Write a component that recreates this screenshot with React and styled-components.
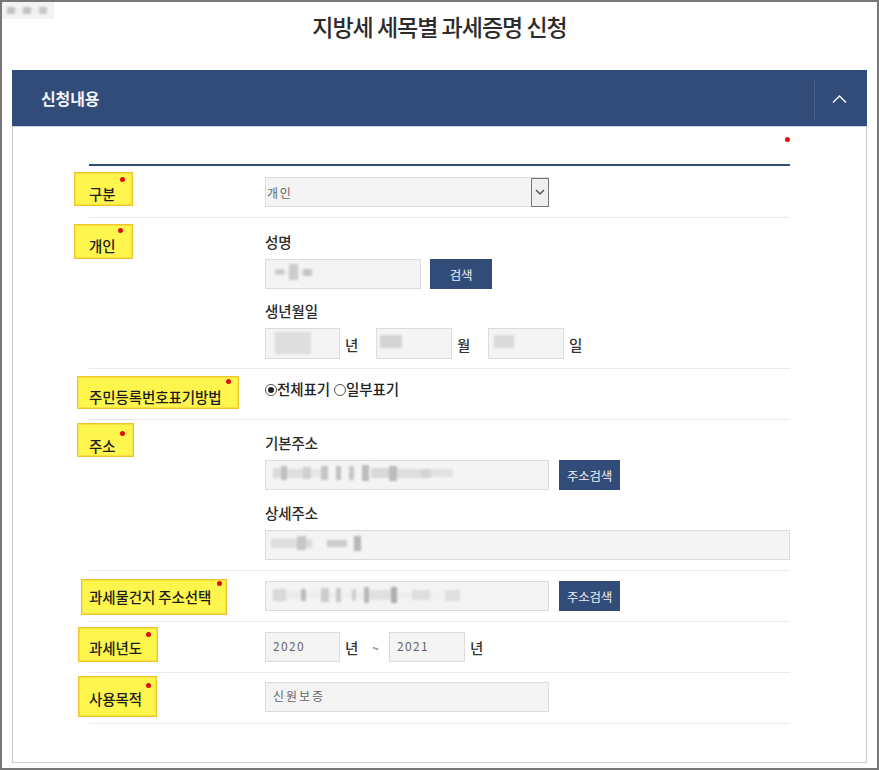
import React from "react";
import styled, { createGlobalStyle } from "styled-components";

const Global = createGlobalStyle`
  * { box-sizing: border-box; }
  html, body { margin: 0; padding: 0; background: #fff; }
  body { font-family: "Noto Sans CJK KR", "Noto Sans", sans-serif; color: #222; }
`;
const Frame = styled.div`
  position: relative; width: 879px; height: 770px; padding: 0 10px;
  border: 2px solid #777; background: #fff; overflow: hidden;
`;
const Corner = styled.div`
  position: absolute; left: -2px; top: -2px; width: 54px; height: 19px; background: #f3f3f3;
  display: flex; align-items: center; padding: 2px 7px 0;
`;
const Title = styled.h1`
  margin: 0 0 20px; height: 48px; line-height: 48px; text-align: center;
  font-size: 23px; font-weight: 500; letter-spacing: -1px; color: #2b2b2b;
`;
const PanelHead = styled.header`
  height: 57px; background: #324c7a; border-bottom: 1px solid #ccd3de;
  display: flex; align-items: center; justify-content: space-between; color: #fff;
`;
const PanelTitle = styled.h2`
  margin: 0 0 1px 29px; font-size: 16px; font-weight: 700; letter-spacing: -0.1px; color: #f4f6fa;
`;
const Toggle = styled.div`
  width: 53px; height: 40px; margin-top: 4px; padding: 0 3px 3px 0; border-left: 1px solid #47608c;
  display: flex; align-items: center; justify-content: center;
`;
const PanelBody = styled.div`
  position: relative; padding: 37px 76px 38px; border: 1px solid #ccc; border-top: 0;
`;
const StrayDot = styled.i`
  position: absolute; top: 10px; right: 76px; width: 5px; height: 5px; border-radius: 50%; background: #e80a0a;
`;
const Rows = styled.div` border-top: 2px solid #324c7a; `;
const Row = styled.div`
  display: grid; grid-template-columns: 176px 1fr; border-bottom: 1px solid #eaeaea;
`;
const LabelCell = styled.div` padding-top: ${p => p.$top}px; `;
const Tag = styled.div`
  position: relative; width: ${p => p.$w}px; height: ${p => p.$h}px;
  margin-left: -${p => p.$out}px; padding: ${p => p.$pt}px 0 0 ${p => p.$out - 1}px;
  background: #fff64d; border: 1px solid #edc42c; box-shadow: inset 0 0 0 1px #f8e040;
  font-size: 14.5px; line-height: 20px; font-weight: 500; letter-spacing: -0.1px; color: #1d1d1d; white-space: nowrap;
`;
const TagDot = styled.i`
  position: absolute; top: ${p => p.$dy}px; right: ${p => p.$dr}px; width: 5px; height: 5px; border-radius: 50%; background: #e00a0a;
`;
const FieldCell = styled.div`
  padding: ${p => p.$top ?? 10}px 0 ${p => p.$bottom ?? 10}px;
`;
const Caption = styled.div`
  height: 20px; line-height: 20px; margin: ${p => p.$gap ?? 0}px 0 7px;
  font-size: 14.5px; font-weight: 500; color: #2a2a2a; letter-spacing: -0.1px;
`;
const Line = styled.div` display: flex; align-items: center; `;
const Box = styled.div`
  display: flex; align-items: center; width: ${p => p.$w}px; height: ${p => p.$h ?? 30}px; padding-left: ${p => p.$pl ?? 7}px;
  background: #f4f4f4; border: 1px solid #dcdcdc; flex: none;
  font-size: 12px; color: #666; letter-spacing: ${p => p.$ls ?? 1.3}px;
`;
const BoxText = styled.span` margin-top: -4px; `;
const Unit = styled.span`
  font-size: 14.5px; font-weight: 500; color: #333; width: ${p => p.$w ?? 36}px; padding-left: 5px; flex: none; margin-top: 1px;
`;
const Tilde = styled.span` width: 17px; font-size: 12px; color: #555; flex: none; `;
const Button = styled.button`
  width: ${p => p.$w}px; height: 30px; margin-left: ${p => p.$ml}px; padding: 0; border: 0; background: #324c7a; color: #edf0f5;
  font: 400 12.5px "Noto Sans CJK KR", sans-serif; letter-spacing: -0.2px;
`;
const Select = styled.div`
  display: flex; align-items: center; justify-content: space-between; width: 284px; height: 30px; padding-left: 1px;
  background: #f4f4f4; border: 1px solid #dcdcdc; font-size: 12px; color: #666; letter-spacing: 1.6px;
`;
const SelectArrow = styled.span`
  display: flex; align-items: center; justify-content: center; width: 18px; height: 29px; margin-right: -1px;
  background: #efefef; border: 1px solid #777;
`;
const RadioLine = styled.div`
  display: flex; align-items: center; height: 20px; font-size: 14.5px; font-weight: 500; color: #222; letter-spacing: -0.1px;
`;
const Radio = styled.span`
  position: relative; width: 12px; height: 12px; margin: 4px 0 0 ${p => p.$ml ?? 0}px; border-radius: 50%; border: 1px solid #555; background: #fff; flex: none;
  &::after { content: ""; display: ${p => p.$on ? "block" : "none"}; position: absolute; inset: 2px; border-radius: 50%; background: #222; }
`;
const Mosaic = styled.div`
  display: flex; align-items: center; margin: ${p => p.$mt ?? -4}px 0 0 ${p => p.$ml ?? 0}px; filter: blur(1.3px);
`;
const Chip = styled.span`
  display: block; width: ${p => p.$w}px; height: ${p => p.$h}px; background: ${p => p.$c}; flex: none;
`;
const chips = (list) => list.map(([w, h, c], i) => <Chip key={i} $w={w} $h={h} $c={c} />);

const Up = () => (
  <svg width="15" height="10" viewBox="0 0 15 10" fill="none"><path d="M1 8.5 7.5 2 14 8.5" stroke="#f2f4f8" strokeWidth="1.5" /></svg>
);
const Down = () => (
  <svg width="10" height="7" viewBox="0 0 10 7" fill="none"><path d="M1 1l4 4 4-4" stroke="#555" strokeWidth="1.5" /></svg>
);

const Label = ({ top, w, h, out, pt, dy, dr, children }) => (
  <LabelCell $top={top}>
    <Tag $w={w} $h={h} $out={out} $pt={pt}>{children}<TagDot $dy={dy} $dr={dr} /></Tag>
  </LabelCell>
);

const addr1 = [[8,10,"#dcdcdc"],[6,14,"#c0c0c0"],[16,9,"#dedede"],[8,12,"#cfcfcf"],[10,8,"#e6e6e6"],[7,14,"#c4c4c4"],[8,0,"#fff"],[5,14,"#c0c0c0"],[8,0,"#fff"],[5,14,"#c8c8c8"],[8,0,"#fff"],[7,16,"#bcbcbc"],[2,0,"#fff"],[18,10,"#d8d8d8"],[8,15,"#bcbcbc"],[24,9,"#dedede"],[10,9,"#d4d4d4"],[22,8,"#e2e2e2"]];
const addr2 = [[13,12,"#d8d8d8"],[15,8,"#ececec"],[5,12,"#bcbcbc"],[15,6,"#eeeeee"],[8,14,"#cccccc"],[7,6,"#eeeeee"],[5,14,"#c8c8c8"],[11,6,"#eeeeee"],[4,12,"#cfcfcf"],[8,6,"#eeeeee"],[5,16,"#b8b8b8"],[22,10,"#e0e0e0"],[6,16,"#aeaeae"],[15,6,"#ececec"],[18,10,"#dedede"],[15,6,"#f0f0f0"],[15,11,"#e0e0e0"]];
const addr3 = [[26,9,"#dedede"],[9,14,"#c6c6c6"],[6,9,"#dcdcdc"],[15,0,"#fff"],[20,7,"#cccccc"],[7,0,"#fff"],[7,15,"#b8b8b8"]];

export default function App() {
  return (
    <Frame>
      <Global />
      <Title>지방세 세목별 과세증명 신청</Title>
      <section>
        <PanelHead>
          <PanelTitle>신청내용</PanelTitle>
          <Toggle><Up /></Toggle>
        </PanelHead>
        <PanelBody>
          <StrayDot />
          <Rows>
            <Row>
              <Label top={6} w={59} h={34} out={15} pt={11} dy={4} dr={7}>구분</Label>
              <FieldCell $top={11}>
                <Select><span>개인</span><SelectArrow><Down /></SelectArrow></Select>
              </FieldCell>
            </Row>
            <Row>
              <Label top={6} w={59} h={35} out={15} pt={11} dy={3} dr={9}>개인</Label>
              <FieldCell $top={14} $bottom={9}>
                <Caption>성명</Caption>
                <Line>
                  <Box $w={156}><Mosaic $ml={2}>{chips([[9,6,"#cccccc"],[5,3,"#eaeaea"],[9,16,"#cccccc"],[5,3,"#eaeaea"],[9,7,"#c4c4c4"]])}</Mosaic></Box>
                  <Button $w={62} $ml={9}>검색</Button>
                </Line>
                <Caption $gap={12}>생년월일</Caption>
                <Line>
                  <Box $w={75} $h={31}><Mosaic $ml={2} $mt={-2}><Chip $w={36} $h={22} $c="#dedede" /></Mosaic></Box>
                  <Unit>년</Unit>
                  <Box $w={76} $h={31} $pl={2}><Mosaic $ml={1} $mt={-4}><Chip $w={22} $h={13} $c="#d4d4d4" /></Mosaic></Box>
                  <Unit>월</Unit>
                  <Box $w={76} $h={31} $pl={2}><Mosaic $ml={3} $mt={-4}><Chip $w={20} $h={13} $c="#dadada" /></Mosaic></Box>
                  <Unit>일</Unit>
                </Line>
              </FieldCell>
            </Row>
            <Row>
              <Label top={7} w={162} h={33} out={12} pt={10} dy={2} dr={7}>주민등록번호표기방법</Label>
              <FieldCell $top={9} $bottom={21}>
                <RadioLine>
                  <Radio $on />전체표기<Radio $ml={4} />일부표기
                </RadioLine>
              </FieldCell>
            </Row>
            <Row>
              <Label top={3} w={57} h={34} out={12} pt={12} dy={7} dr={8}>주소</Label>
              <FieldCell $top={13}>
                <Caption>기본주소</Caption>
                <Line>
                  <Box $w={284}><Mosaic $ml={0}>{chips(addr1)}</Mosaic></Box>
                  <Button $w={61} $ml={10}>주소검색</Button>
                </Line>
                <Caption $gap={13}>상세주소</Caption>
                <Box $w={525} $pl={5}><Mosaic $mt={-4}>{chips(addr3)}</Mosaic></Box>
              </FieldCell>
            </Row>
            <Row>
              <Label top={8} w={146} h={36} out={8} pt={7} dy={1} dr={4}>과세물건지 주소선택</Label>
              <FieldCell>
                <Line>
                  <Box $w={284}><Mosaic $mt={-2}>{chips(addr2)}</Mosaic></Box>
                  <Button $w={61} $ml={10}>주소검색</Button>
                </Line>
              </FieldCell>
            </Row>
            <Row>
              <Label top={5} w={80} h={35} out={11} pt={10} dy={4} dr={6}>과세년도</Label>
              <FieldCell>
                <Line>
                  <Box $w={75}><BoxText>2020</BoxText></Box>
                  <Unit $w={32}>년</Unit>
                  <Tilde>~</Tilde>
                  <Box $w={76}><BoxText>2021</BoxText></Box>
                  <Unit>년</Unit>
                </Line>
              </FieldCell>
            </Row>
            <Row>
              <Label top={3} w={79} h={41} out={11} pt={12} dy={6} dr={5}>사용목적</Label>
              <FieldCell $top={9} $bottom={11}>
                <Box $w={284} $ls={2}><BoxText>신원보증</BoxText></Box>
              </FieldCell>
            </Row>
          </Rows>
        </PanelBody>
      </section>
      <Corner>
        <Mosaic $mt={0}>{chips([[8,7,"#c4c4c4"],[8,3,"#ececec"],[8,7,"#c4c4c4"],[8,3,"#ececec"],[8,7,"#c8c8c8"]])}</Mosaic>
      </Corner>
    </Frame>
  );
}
